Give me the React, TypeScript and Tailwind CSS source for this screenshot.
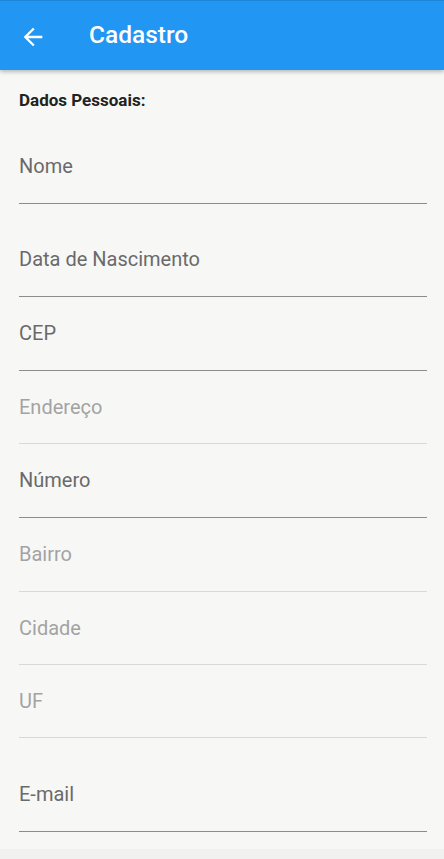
const fields = [
  { label: 'Nome', enabled: true, top: 'pt-[44px]', bottom: 'pb-[25px]' },
  { label: 'Data de Nascimento', enabled: true, top: 'pt-[43px]', bottom: 'pb-[25px]' },
  { label: 'CEP', enabled: true, top: 'pt-6', bottom: 'pb-[25px]' },
  { label: 'Endereço', enabled: false, top: 'pt-6', bottom: 'pb-6' },
  { label: 'Número', enabled: true, top: 'pt-6', bottom: 'pb-[25px]' },
  { label: 'Bairro', enabled: false, top: 'pt-6', bottom: 'pb-[25px]' },
  { label: 'Cidade', enabled: false, top: 'pt-6', bottom: 'pb-6' },
  { label: 'UF', enabled: false, top: 'pt-6', bottom: 'pb-6' },
  { label: 'E-mail', enabled: true, top: 'pt-[44px]', bottom: 'pb-[25px]' },
];

function BackArrow() {
  return (
    <svg width="28" height="28" viewBox="0 0 24 24" fill="white">
      <path d="M20 11H7.83l5.59-5.59L12 4l-8 8 8 8 1.41-1.41L7.83 13H20v-2z" />
    </svg>
  );
}

export default function App() {
  return (
    <div className="min-h-screen flex flex-col bg-[#f7f8f6] font-['Roboto',sans-serif]">
      <header className="h-[70px] shrink-0 flex items-center bg-[#2196f3] border-t border-[#1b86d9] shadow-[0_2px_4px_rgba(0,0,0,0.25)] relative z-10">
        <div className="pl-[19px] pt-[3px]">
          <BackArrow />
        </div>
        <h1 className="ml-[42px] text-[24.5px] font-medium text-white leading-none">Cadastro</h1>
      </header>

      <main className="pl-[19px] pr-[17px] pb-[17px]">
        <h2 className="pt-5 text-[17px] leading-5 font-bold text-[#222]">Dados Pessoais:</h2>
        {fields.map((f) => (
          <div
            key={f.label}
            className={`${f.top} ${f.bottom} border-b ${f.enabled ? 'border-[#8c8c8c]' : 'border-[#d9d9d9]'}`}
          >
            <div className={`h-6 text-[20px] leading-6 ${f.enabled ? 'text-[#6a6a6a]' : 'text-[#a3a3a3]'}`}>
              {f.label}
            </div>
          </div>
        ))}
      </main>

      <div className="flex-1 bg-[#f1f2f0]" />
    </div>
  );
}
